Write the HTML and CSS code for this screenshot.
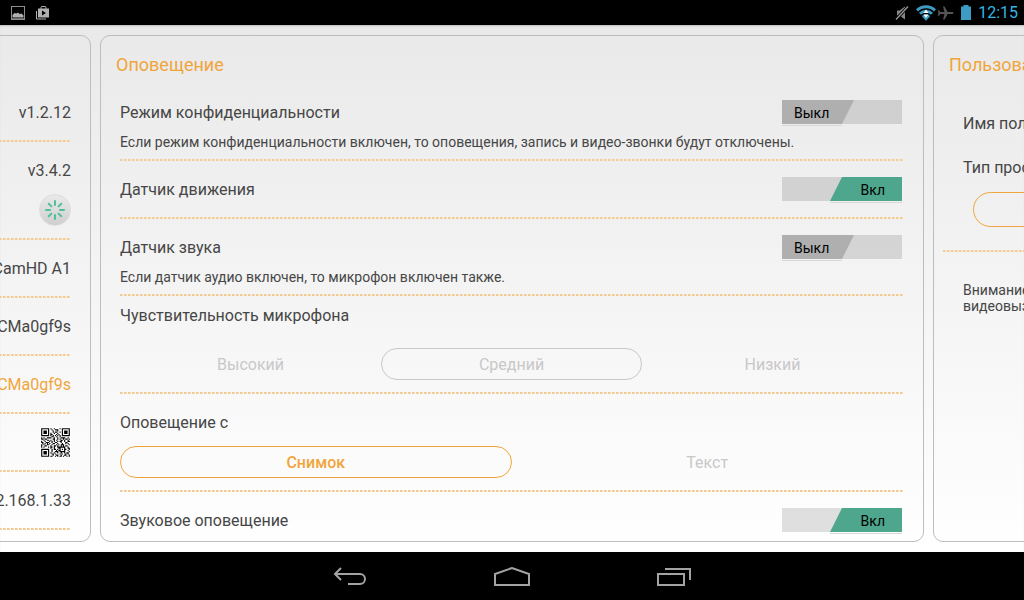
FILE: index.html
```html
<!DOCTYPE html>
<html lang="ru">
<head>
  <meta charset="UTF-8">
  <meta name="viewport" content="width=device-width, initial-scale=1.0">
  <title>Оповещение</title>
  <link rel="stylesheet" href="styles.css">
</head>
<body>
  <header class="status-bar">
    <div class="status-left">
      <svg width="14" height="14" viewBox="0 0 14 14">
        <rect x="0.5" y="0.5" width="13" height="13" fill="none" stroke="#8e8e8e"/>
        <path d="M1.5 11.5V9l2-2 2 .5 1.500-1 1.500 1.500 2-.5 2 2v2z" fill="#b0b0b0"/>
        <path d="M1 12.500h12" stroke="#666"/>
      </svg>
      <svg width="13" height="14" viewBox="0 0 13 14">
        <path d="M.5 5v8h9.500" fill="none" stroke="#b0b0b0"/>
        <path d="M5 3V1.500a1 1 0 0 1 1-1h3a1 1 0 0 1 1 1V3" fill="none" stroke="#b0b0b0"/>
        <path d="M2 2.500h11v9H2zM6 4.500v5l4-2.500z" fill="#b0b0b0" fill-rule="evenodd"/>
      </svg>
    </div>
    <div class="status-right">
      <svg width="14" height="16" viewBox="0 0 14 16">
        <path d="M2 5.500h2.500L10 1.500v13L4.500 10.500H2z" fill="#858585"/>
        <path d="M1 14.500L13 1.500" stroke="#000" stroke-width="3"/>
        <path d="M1 14.500L13 1.500" stroke="#999" stroke-width="1.300"/>
      </svg>
      <svg class="wifi" width="20" height="16" viewBox="0 0 20 16">
        <g fill="none" stroke="#3d9cc4" stroke-width="3">
          <path d="M1 5.400a13 13 0 0 1 18 0"/>
          <path d="M4 8.800a8.600 8.600 0 0 1 12 0"/>
          <path d="M6.800 12a4.500 4.500 0 0 1 6.400 0"/>
        </g>
        <path d="M6.500 12L10 15.800 13.500 12z" fill="#3d9cc4"/>
        <path d="M7.500 8L10 4.500 12.500 8zM7.500 9.500L10 13l2.500-3.500z" fill="#fff"/>
      </svg>
      <svg class="airplane" width="17" height="14" viewBox="0 0 17 14">
        <path d="M16.500 7c0-.7-.7-1.100-1.500-1.100h-4.300L7.500.5H6l1.500 5.400H3.400L2 4.200H.7L1.500 7 .7 9.800H2l1.400-1.700h4.100L6 13.500h1.500l3.200-5.400H15c.8 0 1.500-.4 1.500-1.100z" fill="#555"/>
      </svg>
      <svg width="10" height="15" viewBox="0 0 10 15">
        <path d="M0 1.500h2.500V0h5v1.500H10V15H0z" fill="#3d9cc4"/>
      </svg>
      <time class="clock">12:15</time>
    </div>
  </header>

  <main class="panels">
    <section class="panel panel-info">
      <div class="info-row">v1.2.12</div>
      <div class="info-row info-row-tall">
        v3.4.2
        <button class="refresh" type="button" aria-label="Обновить">
          <svg width="20" height="20" viewBox="-10 -10 20 20" stroke="#4fc09c" stroke-width="2" stroke-linecap="round">
            <path d="M0-5V-9M0 5V9M-5 0H-9M5 0H9M3.600-3.600L6.300-6.300M3.600 3.600L6.300 6.300M-3.600 3.600L-6.300 6.300M-3.600-3.600L-6.300-6.300"/>
          </svg>
        </button>
      </div>
      <div class="info-row">CamHD A1</div>
      <div class="info-row">CMa0gf9s</div>
      <div class="info-row info-accent">CMa0gf9s</div>
      <div class="info-row"><svg class="qr" id="qr" viewBox="-1 -1 27 27"></svg></div>
      <div class="info-row">192.168.1.33</div>
    </section>

    <section class="panel">
      <h2 class="panel-title">Оповещение</h2>
      <div class="settings">
        <div class="setting">
          <div class="setting-head">
            <label for="privacy">Режим конфиденциальности</label>
            <span class="toggle">
              <input type="checkbox" id="privacy">
              <span class="toggle-off">Выкл</span><span class="toggle-on">Вкл</span>
            </span>
          </div>
          <p class="note">Если режим конфиденциальности включен, то оповещения, запись и видео-звонки будут отключены.</p>
        </div>
        <div class="setting">
          <div class="setting-head">
            <label for="motion">Датчик движения</label>
            <span class="toggle">
              <input type="checkbox" id="motion" checked>
              <span class="toggle-off">Выкл</span><span class="toggle-on">Вкл</span>
            </span>
          </div>
        </div>
        <div class="setting">
          <div class="setting-head">
            <label for="sound">Датчик звука</label>
            <span class="toggle">
              <input type="checkbox" id="sound">
              <span class="toggle-off">Выкл</span><span class="toggle-on">Вкл</span>
            </span>
          </div>
          <p class="note">Если датчик аудио включен, то микрофон включен также.</p>
        </div>
        <fieldset class="setting setting-mic">
          <div class="setting-head" id="mic-label">Чувствительность микрофона</div>
          <div class="segments" role="radiogroup" aria-labelledby="mic-label">
            <label class="segment"><input type="radio" name="mic" disabled><span>Высокий</span></label>
            <label class="segment"><input type="radio" name="mic" disabled checked><span>Средний</span></label>
            <label class="segment"><input type="radio" name="mic" disabled><span>Низкий</span></label>
          </div>
        </fieldset>
        <fieldset class="setting setting-choice">
          <div class="setting-head" id="alert-label">Оповещение с</div>
          <div class="segments" role="radiogroup" aria-labelledby="alert-label">
            <label class="segment"><input type="radio" name="alert" checked><span>Снимок</span></label>
            <label class="segment"><input type="radio" name="alert"><span>Текст</span></label>
          </div>
        </fieldset>
        <div class="setting">
          <div class="setting-head">
            <label for="chime">Звуковое оповещение</label>
            <span class="toggle">
              <input type="checkbox" id="chime" checked>
              <span class="toggle-off">Выкл</span><span class="toggle-on">Вкл</span>
            </span>
          </div>
        </div>
      </div>
    </section>

    <section class="panel">
      <h2 class="panel-title">Пользователи</h2>
      <div class="profile">
        <div class="profile-fields">
          <div>Имя пользователя</div>
          <div>Тип просмотра</div>
          <button class="profile-button" type="button"></button>
        </div>
        <p class="warning">Внимание<br>видеовызов</p>
      </div>
    </section>
  </main>

  <nav class="nav-bar">
    <button type="button" aria-label="Назад">
      <svg width="34" height="20" viewBox="0 0 34 20" fill="none" stroke="#a3a3a3" stroke-width="2">
        <path d="M8 1L2 7l6 6M2 7h25a5 5 0 0 1 0 10H15"/>
      </svg>
    </button>
    <button type="button" aria-label="Домой">
      <svg width="36" height="20" viewBox="0 0 36 20" fill="none" stroke="#a3a3a3" stroke-width="2">
        <path d="M1 18V7L18 1l17 6v11z"/>
      </svg>
    </button>
    <button type="button" aria-label="Недавние">
      <svg width="34" height="20" viewBox="0 0 34 20" fill="none" stroke="#a3a3a3" stroke-width="2">
        <path d="M1 7h26v11H1zM8 2h25v11"/>
      </svg>
    </button>
  </nav>

  <script src="script.js"></script>
</body>
</html>
```
FILE: styles.css
```css
* {
  box-sizing: border-box;
}

body {
  margin: 0;
  height: 100vh;
  display: flex;
  flex-direction: column;
  overflow: hidden;
  background: #000;
  color: #464646;
  font-family: Roboto, "Noto Sans", sans-serif;
  font-size: 16px;
  line-height: 24px;
}

h2, p, fieldset {
  margin: 0;
}

svg {
  display: block;
}

button {
  padding: 0;
  border: none;
  background: none;
}

/* status bar */
.status-bar {
  display: flex;
  justify-content: space-between;
  height: 25px;
  padding: 0 6px 0 11px;
}

.status-left,
.status-right {
  display: flex;
  align-items: center;
}

.status-left {
  gap: 11px;
}

.status-right {
  gap: 7px;
}

.wifi {
  margin-right: -6px;
}

.clock {
  color: #33b5e5;
}

/* panels */
.panels {
  flex: 1;
  min-height: 0;
  display: flex;
  justify-content: center;
  gap: 9px;
  padding: 10px 0;
  overflow: hidden;
  background: linear-gradient(#e9e9e9, #fff);
  box-shadow: inset 0 2px 2px -1px #bbb;
}

.panel {
  flex: 0 0 calc(100% - 200px);
  border: 1px solid #bdbdbd;
  border-radius: 10px;
  overflow: hidden;
}

.panel-title {
  padding: 17px 15px 0;
  color: #f0a53c;
  font-size: 18px;
  font-weight: 400;
}

.setting,
.info-row,
.profile-fields {
  background: repeating-linear-gradient(90deg, #f3cb92 0 2px, #f5dcb8 2px 3px, transparent 3px 4px) bottom / 100% 2px no-repeat;
}

/* left panel */
.panel-info {
  padding: 48px 19px 0;
}

.info-row {
  display: flex;
  align-items: center;
  justify-content: flex-end;
  height: 58px;
}

.info-row-tall {
  flex-direction: column;
  align-items: flex-end;
  justify-content: flex-start;
  gap: 11px;
  height: 98px;
  padding-top: 17px;
}

.info-accent {
  color: #f0a53c;
}

.refresh {
  display: flex;
  align-items: center;
  justify-content: center;
  width: 32px;
  height: 32px;
  border: 1px solid #ddd;
  border-radius: 50%;
  background: linear-gradient(#e9e9e9, #cfcfcf);
}

.qr {
  width: 31px;
  height: 31px;
  margin-bottom: 2px;
  background: #fff;
}

/* settings */
.settings {
  padding: 7px 20px 0 19px;
}

.setting {
  padding: 16px 0 18px;
  border: none;
}

.setting:last-child {
  background: none;
}

.setting-head {
  display: flex;
  justify-content: space-between;
  height: 24px;
  line-height: 26px;
}

.note {
  margin: 8px 0 -9px;
  font-size: 14px;
  line-height: 20px;
}

.setting-mic {
  padding: 7px 0 14px;
}

.setting-choice {
  padding-bottom: 14px;
}

/* slanted switch */
.toggle {
  position: relative;
  width: 120px;
  height: 24px;
  margin-right: 1px;
  background: rgba(0, 0, 0, 0.12);
  color: #000;
  font-size: 14px;
}

.toggle input {
  position: absolute;
  inset: 0;
  width: 100%;
  height: 100%;
  margin: 0;
  opacity: 0;
}

.toggle-off,
.toggle-on {
  display: block;
  width: 72px;
  height: 24px;
  padding: 0 12px;
  pointer-events: none;
}

.toggle-off {
  background: #afafaf;
  clip-path: polygon(0 0, 100% 0, 60px 100%, 0 100%);
}

.toggle-on {
  display: none;
  margin-left: auto;
  padding-right: 17px;
  background: #4ea68c;
  clip-path: polygon(12px 0, 100% 0, 100% 100%, 0 100%);
  text-align: right;
}

.toggle input:checked ~ .toggle-off {
  display: none;
}

.toggle input:checked ~ .toggle-on {
  display: block;
}

.toggle::after {
  content: "";
  position: absolute;
  top: 25px;
  left: 0;
  width: 60px;
  height: 1px;
  background: #d8d8d8;
}

.toggle:has(input:checked)::after {
  left: 48px;
  width: 72px;
}

/* segmented choice */
.segments {
  display: flex;
  margin-top: 12px;
}

.setting-mic .segments {
  margin-top: 21px;
}

.segment {
  position: relative;
  flex: 1;
}

.segment input {
  position: absolute;
  opacity: 0;
}

.segment span {
  display: block;
  padding: 4px 0 2px;
  border: 1px solid transparent;
  border-radius: 16px;
  color: #c8c8c8;
  text-align: center;
}

.segment input:checked + span {
  border-color: #f0a53c;
  color: #f0a53c;
  font-weight: 500;
}

.segment input:disabled:checked + span {
  border-color: #c8c8c8;
  color: #c8c8c8;
  font-weight: 400;
}

/* right panel */
.profile {
  padding: 35px 9px 0;
}

.profile-fields {
  display: flex;
  flex-direction: column;
  gap: 20px;
  padding: 0 20px 25px;
}

.profile-button {
  height: 35px;
  margin: -8px 10px 0;
  border: 1px solid #f0a53c;
  border-radius: 18px;
}

.warning {
  padding: 30px 20px 0;
  font-size: 14px;
  line-height: 16px;
}

/* navigation */
.nav-bar {
  display: flex;
  justify-content: center;
  height: 48px;
  padding-top: 2px;
}

.nav-bar button {
  display: flex;
  align-items: center;
  justify-content: center;
  width: 162px;
}
```
FILE: script.js
```js
const rows = [
  '1111111010010000101111111',
  '1000001001001110001000001',
  '1011101000100010001011101',
  '1011101000101100101011101',
  '1011101010010010001011101',
  '1000001011000101001000001',
  '1111111010101010101111111',
  '0000000001100100100000000',
  '1010011110010010011110010',
  '1101100000110010100101101',
  '0010011010010100011010010',
  '1001000101010010110010011',
  '1100111001001100010001100',
  '0101010100110010001001010',
  '1010011001000101011100001',
  '1001100010011010010101100',
  '1010001011010011111110010',
  '0000000010010001100010011',
  '1111111001011010101011001',
  '1000001001000101100010010',
  '1011101001001110111110001',
  '1011101010010010010010110',
  '1011101001101000101001010',
  '1000001000100110010011001',
  '1111111011001010110100101'
];

// One square per dark module
let d = '';
rows.forEach((row, y) => {
  [...row].forEach((cell, x) => {
    if (cell === '1') d += `M${x} ${y}h1v1h-1z`;
  });
});

const path = document.createElementNS('http://www.w3.org/2000/svg', 'path');
path.setAttribute('d', d);
document.getElementById('qr').appendChild(path);
```
